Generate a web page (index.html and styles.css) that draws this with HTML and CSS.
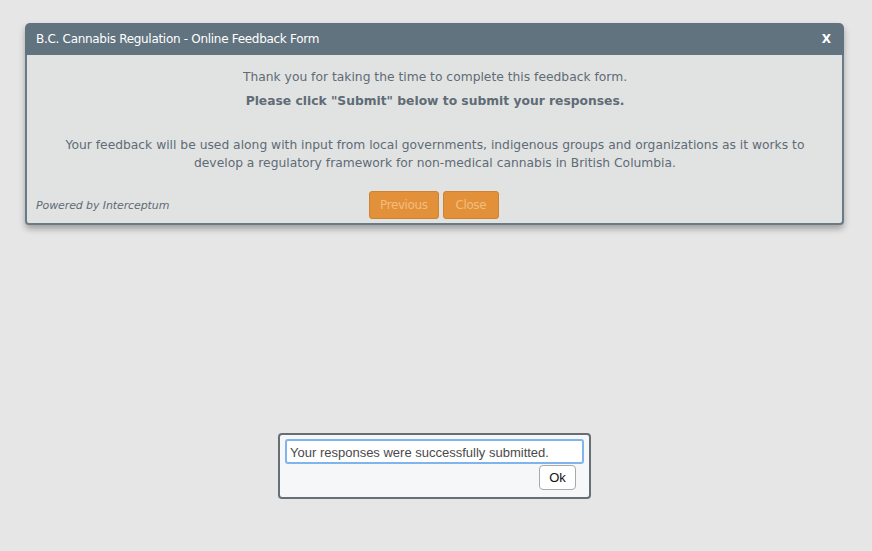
FILE: index.html
```html
<!DOCTYPE html>
<html lang="en">
  <head>
    <meta charset="UTF-8" />
    <title>B.C. Cannabis Regulation - Online Feedback Form</title>
    <link rel="stylesheet" href="styles.css">
  </head>
  <body>
    <div class="page">
      <div class="dialog">
        <div class="dialog-header">
          <span class="dialog-title">B.C. Cannabis Regulation - Online Feedback Form</span>
          <span class="dialog-close">X</span>
        </div>
        <div class="dialog-body">
          <p class="intro">Thank you for taking the time to complete this feedback form.</p>
          <p class="intro strong">Please click "Submit" below to submit your responses.</p>
          <p class="note">Your feedback will be used along with input from local governments, indigenous groups and organizations as it works to develop a regulatory framework for non-medical cannabis in British Columbia.</p>
          <div class="dialog-footer">
            <span class="powered">Powered by Interceptum</span>
            <div class="buttons">
              <button class="btn">Previous</button>
              <button class="btn btn-close">Close</button>
            </div>
          </div>
        </div>
      </div>

      <div class="alert">
        <div class="alert-message">Your responses were successfully submitted.</div>
        <div class="alert-actions">
          <button class="alert-ok">Ok</button>
        </div>
      </div>
    </div>
  </body>
</html>
```

FILE: styles.css
```css
* {
  margin: 0;
  padding: 0;
  box-sizing: border-box;
}

body {
  background: #e6e6e6;
  font-family: "DejaVu Sans", Verdana, sans-serif;
  color: #5f6b75;
  min-height: 100vh;
}

.page {
  padding: 23px 28px 0 25px;
  display: flex;
  flex-direction: column;
  align-items: center;
}

/* Main dialog */
.dialog {
  width: 819px;
  border-radius: 5px;
  box-shadow: 0 4px 6px rgba(0, 0, 0, 0.3);
  background: #e1e3e3;
}

.dialog-header {
  background: #627380;
  color: #fff;
  height: 32px;
  border-radius: 5px 5px 0 0;
  display: flex;
  align-items: center;
  justify-content: space-between;
  padding: 0 13px 0 11px;
}

.dialog-title {
  font-size: 12px;
  letter-spacing: -0.3px;
}

.dialog-close {
  font-size: 12px;
  font-weight: bold;
}

.dialog-body {
  border: 2px solid #6b7b86;
  border-top: none;
  border-radius: 0 0 4px 4px;
  text-align: center;
  padding: 10px 8px 3px 9px;
}

.intro {
  font-size: 12.3px;
  line-height: 24px;
}

.intro.strong {
  font-weight: bold;
}

.note {
  font-size: 12.3px;
  line-height: 18px;
  margin-top: 23px;
  padding: 0 20px;
}

.dialog-footer {
  display: flex;
  align-items: center;
  margin-top: 18px;
  height: 30px;
  position: relative;
}

.powered {
  font-size: 11px;
  font-style: italic;
  letter-spacing: -0.1px;
}

.buttons {
  position: absolute;
  left: 333px;
  top: 1px;
  display: flex;
  gap: 4px;
}

.btn {
  font-family: "DejaVu Sans", Verdana, sans-serif;
  font-size: 12px;
  letter-spacing: -0.4px;
  color: #f2bd7e;
  background: #e2913a;
  border: 1px solid #cf8230;
  border-radius: 3px;
  height: 28px;
  padding: 0 10px;
}

.btn-close {
  padding: 0 12px;
}

/* Alert box */
.alert {
  margin-top: 208px;
  width: 313px;
  background: #f5f7f9;
  border: 2px solid #666f76;
  border-radius: 4px;
  padding: 4px 5px 7px 5px;
}

.alert-message {
  font-family: "Liberation Sans", Arial, sans-serif;
  font-size: 13px;
  color: #4a4a4a;
  border: 2px solid #80b4ec;
  border-radius: 3px;
  background: #fff;
  height: 25px;
  padding: 2px 3px 0;
  line-height: 19px;
}

.alert-actions {
  display: flex;
  justify-content: flex-end;
  padding: 1px 8px 0 0;
}

.alert-ok {
  font-family: "Liberation Sans", Arial, sans-serif;
  font-size: 13px;
  color: #111;
  background: #fff;
  border: 1px solid #a9a9a9;
  border-radius: 4px;
  width: 37px;
  height: 25px;
}
```
